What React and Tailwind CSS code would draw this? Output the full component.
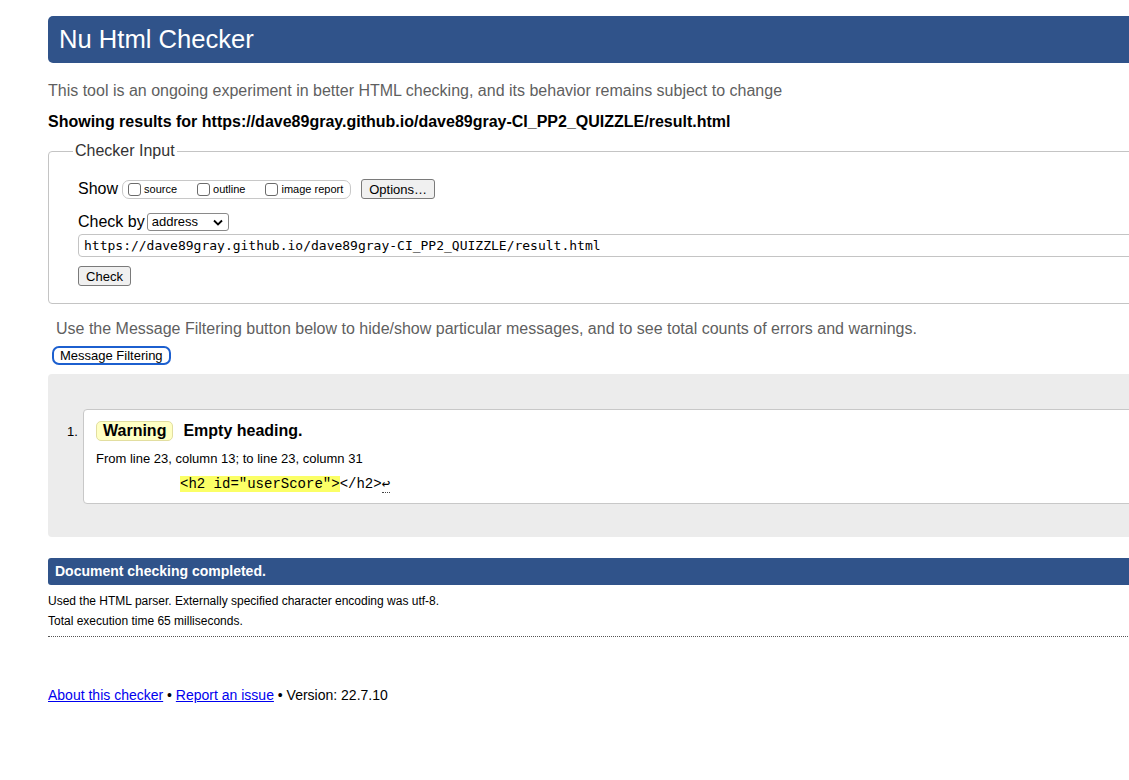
import React from 'react';

const sans = { fontFamily: '"Liberation Sans", Arial, sans-serif' };

function Box() {
  return <span className="inline-block w-[13px] h-[13px] rounded-[3px] border border-[#6b6b6b] bg-white mr-[3px]" />;
}

export default function App() {
  return (
    <div className="w-full min-h-[780px] overflow-hidden bg-white text-black" style={sans}>
      <div className="w-[1200px] pl-[48px]">
        <div className="mt-[16px] h-[47px] rounded-l-[5px] bg-[#30538a] flex items-center pl-[11px]">
          <h1 className="text-[25.6px] text-white leading-none">Nu Html Checker</h1>
        </div>

        <p className="mt-[19px] text-[16px] leading-[18px] text-[#5f5f5f]">
          This tool is an ongoing experiment in better HTML checking, and its behavior remains subject to change
        </p>
        <p className="mt-[13px] text-[16px] leading-[18px] font-bold">
          Showing results for https://dave89gray.github.io/dave89gray-CI_PP2_QUIZZLE/result.html
        </p>

        <fieldset className="mt-[11px] border border-[#c4c4c4] rounded-l-[4px] pl-[29px] pb-[15px]">
          <legend className="-ml-[5px] px-[2px] text-[16px] leading-[18px] text-[#333]">Checker Input</legend>

          <div className="mt-[19px] h-[20px] flex items-center">
            <span className="text-[16px] mr-[4px]">Show</span>
            <span className="h-[19px] flex items-center border border-[#c8c8c8] rounded-[7px] pl-[5px] pr-[7px] text-[11px]">
              <span className="flex items-center"><Box />source</span>
              <span className="flex items-center ml-[20px]"><Box />outline</span>
              <span className="flex items-center ml-[20px]"><Box />image report</span>
            </span>
            <button className="ml-[10px] h-[20px] px-[7px] border border-[#7a7a7a] rounded-[3px] bg-[#f0f0f0] text-[13px] leading-none">
              Options…
            </button>
          </div>

          <div className="mt-[13px] h-[20px] flex items-center">
            <span className="text-[16px]">Check by</span>
            <span className="ml-[2px] w-[82px] h-[18px] flex items-center justify-between border border-[#8a8a8a] rounded-[3px] pl-[4px] pr-[5px] text-[13px]">
              address
              <svg width="10" height="7" viewBox="0 0 10 7"><path d="M1 1.5 L5 5.5 L9 1.5" stroke="#000" strokeWidth="1.8" fill="none" /></svg>
            </span>
          </div>

          <div className="mt-[2px] h-[23px] flex items-center border border-[#c4c4c4] rounded-l-[4px] pl-[5px] text-[13px]" style={{ fontFamily: '"DejaVu Sans Mono", monospace' }}>
            https://dave89gray.github.io/dave89gray-CI_PP2_QUIZZLE/result.html
          </div>

          <button className="mt-[9px] h-[20px] w-[53px] border border-[#7a7a7a] rounded-[3px] bg-[#f0f0f0] text-[13px] leading-none">
            Check
          </button>
        </fieldset>

        <p className="mt-[16px] ml-[8px] text-[16px] leading-[18px] text-[#5f5f5f]">
          Use the Message Filtering button below to hide/show particular messages, and to see total counts of errors and warnings.
        </p>
        <button className="mt-[8px] ml-[4px] h-[19px] px-[6px] border-2 border-[#1c5fcf] rounded-[7px] bg-white text-[13px] leading-none">
          Message Filtering
        </button>

        <div className="mt-[7px] rounded-l-[4px] bg-[#ececec] pt-[35px] pb-[33px] pl-[19px] flex items-start">
          <span className="w-[16px] mt-[16px] text-[13px] leading-[14px]">1.</span>
          <div className="flex-1 bg-white border border-[#c8c8c8] rounded-l-[4px] pt-[11px] pl-[12px] pb-[11px]">
            <div className="flex items-center h-[20px]">
              <span className="h-[20px] px-[6px] flex items-center bg-[#ffffc4] border border-[#e2dea0] rounded-[5px] text-[16px] font-bold">Warning</span>
              <span className="ml-[10px] text-[16px] font-bold">Empty heading.</span>
            </div>
            <p className="mt-[10px] text-[13px] leading-[16px]">From line 23, column 13; to line 23, column 31</p>
            <p className="mt-[9px] pl-[84px] text-[14px] leading-[16px]" style={{ fontFamily: '"Liberation Mono", monospace' }}>
              <span className="bg-[#fbff66]">&lt;h2 id="userScore"&gt;</span>&lt;/h2&gt;<span className="border-b border-dotted border-[#444]">↩</span>
            </p>
          </div>
        </div>

        <div className="mt-[21px] h-[27px] rounded-l-[3px] bg-[#30538a] flex items-center pl-[7px]">
          <span className="text-[14px] font-bold text-white">Document checking completed.</span>
        </div>
        <p className="mt-[6px] text-[12px] leading-[20px]">Used the HTML parser. Externally specified character encoding was utf-8.</p>
        <p className="text-[12px] leading-[20px] pb-[5px] border-b border-dotted border-[#555]">Total execution time 65 milliseconds.</p>

        <p className="mt-[50px] text-[14px] leading-[16px]">
          <a href="#" className="text-[#0000ee] underline">About this checker</a>
          {' • '}
          <a href="#" className="text-[#0000ee] underline">Report an issue</a>
          {' • Version: 22.7.10'}
        </p>
      </div>
    </div>
  );
}
